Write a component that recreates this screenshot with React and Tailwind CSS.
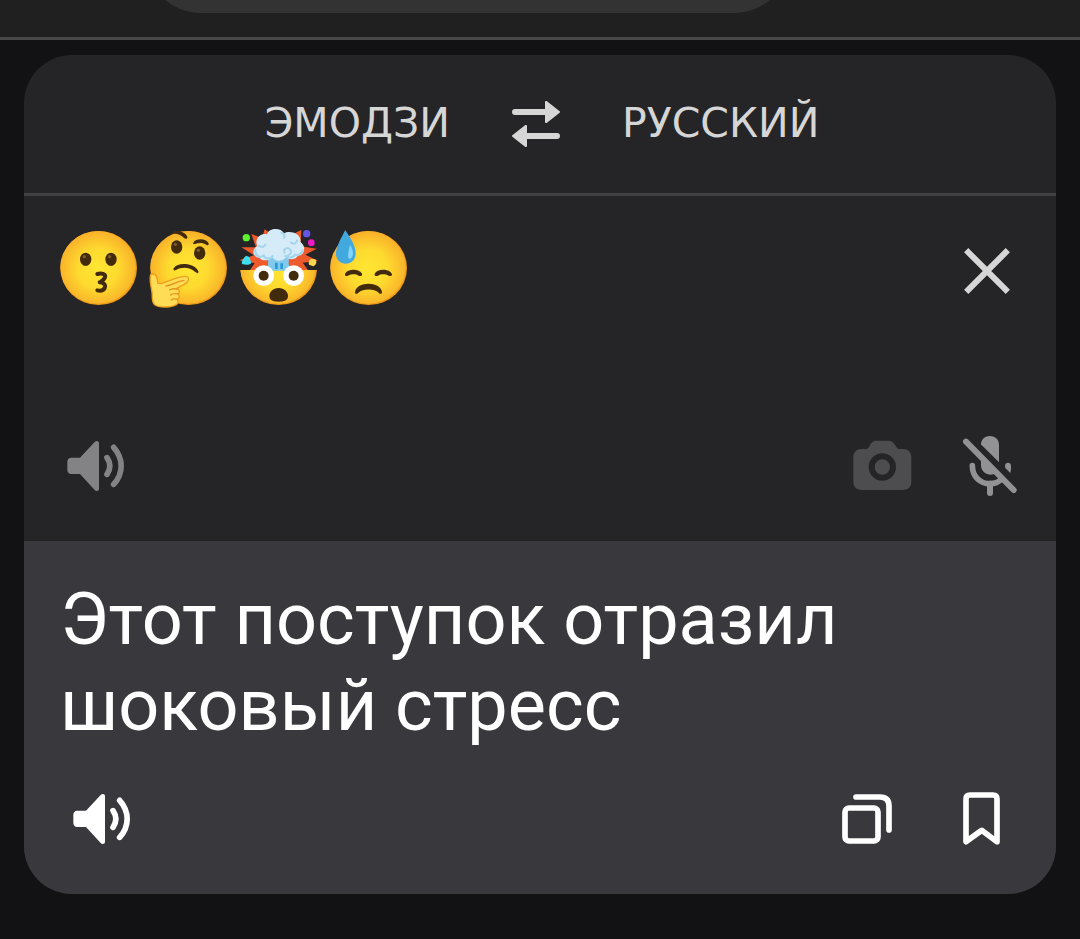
import { useState } from 'react';

function Face() {
  return (
    <>
      <defs>
        <radialGradient id="face" cx="50%" cy="52%" r="52%">
          <stop offset="0" stopColor="#ffe632" />
          <stop offset="0.5" stopColor="#fedb2f" />
          <stop offset="1" stopColor="#f9b02a" />
        </radialGradient>
      </defs>
      <ellipse cx="146" cy="144" rx="115" ry="111" fill="#ee9a18" />
      <ellipse cx="144" cy="142" rx="113" ry="109" fill="url(#face)" />
    </>
  );
}

function Eye({ cx, cy }) {
  return (
    <>
      <ellipse cx={cx} cy={cy} rx="17" ry="20" fill="#422b0d" />
      <ellipse cx={cx - 4} cy={cy - 8} rx="5" ry="5" fill="#7d5a2c" />
    </>
  );
}

function KissingEmoji() {
  return (
    <svg viewBox="0 0 270 285" className="h-[95px] w-[90px]" role="img" aria-label="😗">
      <Face />
      <Eye cx={107} cy={118} />
      <Eye cx={183} cy={118} />
      <path
        d="M142 162 C154 158 168 162 165 172 C163 180 154 184 149 187 C160 187 168 194 164 204 C160 212 150 213 142 211"
        fill="none"
        stroke="#422b0d"
        strokeWidth="12"
        strokeLinecap="round"
        strokeLinejoin="round"
      />
    </svg>
  );
}

function ThinkingEmoji() {
  return (
    <svg viewBox="0 0 270 285" className="h-[95px] w-[90px]" role="img" aria-label="🤔">
      <Face />
      <Eye cx={110} cy={81} />
      <Eye cx={179} cy={99} />
      <g fill="#422b0d">
        <path d="M96 39 C106 27 135 35 142 50 C144 56 137 58 132 54 C121 44 110 40 98 42 Z" />
        <path d="M160 68 C168 54 199 55 206 70 C207 77 201 77 196 73 C186 67 174 68 165 72 C160 73 158 71 160 68 Z" />
        <path d="M101 145 C114 125 164 129 175 154 C177 160 172 161 167 157 C148 140 126 140 108 150 C102 153 99 150 101 145 Z" />
      </g>
      <path
        d="M32 164 C39 159 49 164 51 174 L54 190 L67 190 C84 183 109 172 132 169 C145 168 150 178 142 186 C136 193 118 200 107 207 C118 205 122 216 114 222 C120 226 118 237 112 238 C117 247 112 255 104 256 C92 262 57 264 44 254 C34 246 38 231 36 217 C34 200 27 179 32 164 Z"
        fill="#ffdc55"
        stroke="#ed9f1d"
        strokeWidth="4"
      />
      <path
        d="M78 198 C94 195 112 184 132 181 M89 210 C97 205 107 206 114 207 M92 225 C98 219 108 221 114 222 M94 240 C98 236 106 236 112 238"
        fill="none"
        stroke="#e5941c"
        strokeWidth="4"
        strokeLinecap="round"
      />
    </svg>
  );
}

function ExplodingEmoji() {
  return (
    <svg viewBox="0 0 270 285" className="h-[95px] w-[90px]" role="img" aria-label="🤯">
      <defs>
        <clipPath id="bowl">
          <rect x="0" y="150" width="270" height="130" />
        </clipPath>
      </defs>
      <path
        d="M60 150 L74 130 L28 121 L72 106 L34 82 L78 82 L64 42 L96 54 L104 28 L130 46 L184 44 L214 30 L212 66 L222 80 L260 86 L226 104 L264 122 L218 128 L234 150 Z"
        fill="#ee5a2c"
      />
      <g clipPath="url(#bowl)">
        <Face />
      </g>
      <path d="M112 108 H178 C174 126 176 138 182 152 H108 C116 138 116 124 112 108 Z" fill="#81c9ed" />
      <path d="M139 128 V147 M155 130 V147" stroke="#259bd8" strokeWidth="8" />
      <path
        d="M88 113 C67 112 64 86 82 79 C72 58 91 36 111 43 C117 23 153 22 162 40 C181 29 216 43 211 66 C230 79 224 107 204 107 C196 121 175 120 168 111 C158 127 134 125 127 111 C117 124 96 124 88 113 Z"
        fill="#d5ecf8"
      />
      <g fill="none" stroke="#a3d5ed" strokeWidth="6" strokeLinecap="round">
        <path d="M76 89 C74 109 91 115 101 106 C105 118 121 119 127 108" />
        <path d="M87 78 C95 83 103 80 106 74" />
        <path d="M202 61 C199 72 190 73 183 68" />
        <path d="M164 98 C158 88 170 80 179 87 C189 96 178 111 164 107 C174 115 190 115 194 104 C205 108 216 99 218 91" />
        <path d="M154 38 C164 42 166 49 162 54" />
      </g>
      <circle cx="49" cy="53" r="11" fill="#5cf52d" />
      <circle cx="230" cy="41" r="11" fill="#6556e8" />
      <circle cx="244" cy="68" r="10" fill="#f019c5" />
      <path d="M48 107 L58 111 L64 128 C60 136 48 135 36 132 C34 121 40 116 48 107 Z" fill="#40dff0" />
      <path d="M244 116 L256 118 C262 126 258 136 250 139 L237 134 C234 124 238 120 244 116 Z" fill="#fdd64b" />
      <circle cx="101" cy="167" r="31" fill="#ffffff" />
      <circle cx="191" cy="167" r="31" fill="#ffffff" />
      <circle cx="101" cy="167" r="15" fill="#422b0d" />
      <circle cx="191" cy="167" r="15" fill="#422b0d" />
      <path d="M146 204 C163 204 174 216 174 228 C174 241 162 245 146 245 C130 245 118 241 118 228 C118 216 129 204 146 204 Z" fill="#422b0d" />
    </svg>
  );
}

function SweatEmoji() {
  return (
    <svg viewBox="0 0 270 285" className="h-[95px] w-[90px]" role="img" aria-label="😓">
      <Face />
      <path d="M76 30 C87 48 107 75 107 100 C107 119 94 131 78 131 C60 131 47 118 48 99 C49 78 66 50 76 30 Z" fill="#42a9df" />
      <path d="M90 74 C100 87 103 110 91 116 C80 119 84 98 90 74 Z" fill="#81d4fa" />
      <g fill="#422b0d">
        <path d="M75 163 C80 146 118 145 126 161 C128 168 121 170 116 167 C106 161 94 162 84 167 C78 169 74 168 75 163 Z" />
        <path d="M164 161 C172 145 210 146 216 163 C217 168 212 169 206 167 C196 162 184 161 174 167 C169 170 162 168 164 161 Z" />
        <path d="M105 216 C109 183 182 183 186 216 C186 223 180 223 176 218 C162 205 130 205 115 218 C110 223 105 223 105 216 Z" />
      </g>
    </svg>
  );
}

function SpeakerIcon() {
  return (
    <svg viewBox="0 0 180 156" className="h-[52px] w-[60px]" fill="currentColor" aria-hidden="true">
      <path d="M16 53 H42 L86 6 C91 1 99 3 99 10 V146 C99 153 91 155 86 150 L42 102 H16 C8 102 4 97 4 90 V65 C4 58 8 53 16 53 Z" />
      <path
        d="M123 53 C134 69 134 87 123 103 M143 22 C173 56 173 100 143 133"
        fill="none"
        stroke="currentColor"
        strokeWidth="17"
        strokeLinecap="round"
      />
    </svg>
  );
}

function SwapIcon() {
  return (
    <svg viewBox="0 0 144 144" className="size-12" fill="currentColor" aria-hidden="true">
      <path d="M9 36 H104 M40 108 H135" stroke="currentColor" strokeWidth="18" strokeLinecap="round" />
      <path d="M99 7 C99 3 102 2 105 4 L142 33 C145 35 145 37 142 39 L105 68 C102 70 99 69 99 65 Z" />
      <path d="M45 79 C45 75 42 74 39 76 L2 105 C-1 107 -1 109 2 111 L39 140 C42 142 45 141 45 137 Z" />
    </svg>
  );
}

function CloseIcon() {
  return (
    <svg viewBox="0 0 144 144" className="size-12" aria-hidden="true">
      <path d="M16 16 L128 128 M128 16 L16 128" stroke="currentColor" strokeWidth="18" strokeLinecap="square" />
    </svg>
  );
}

function CameraIcon() {
  return (
    <svg viewBox="0 3 186 162" className="h-[54px] w-[62px]" fill="currentColor" aria-hidden="true">
      <path
        fillRule="evenodd"
        d="M30 33 H42 C48 33 50 29 53 24 C58 12 64 8 75 8 H108 C119 8 125 12 131 24 C134 29 136 33 142 33 H152 C169 33 178 43 178 59 V130 C178 147 169 156 152 156 H30 C13 156 4 147 4 130 V59 C4 43 13 33 30 33 Z M91 46 A41 41 0 1 0 91 128 A41 41 0 1 0 91 46 Z"
      />
      <circle cx="91" cy="87" r="23" />
    </svg>
  );
}

function MicOffIcon() {
  return (
    <svg viewBox="0 0 168 186" className="h-[62px] w-[56px]" fill="currentColor" aria-hidden="true">
      <path d="M57 32 C56 15 67 3 84 3 C100 3 111 14 111 30 V82 L58 29 Z" />
      <path d="M57 71 L101 115 C84 126 57 115 57 91 Z" />
      <path
        d="M31 92 C31 124 54 146 84 146 C100 146 110 141 119 132"
        fill="none"
        stroke="currentColor"
        strokeWidth="17"
        strokeLinecap="round"
      />
      <path d="M84 146 V174 M12 20 L155 165" stroke="currentColor" strokeWidth="18" strokeLinecap="round" />
      <path d="M129 93 C129 80 147 80 147 93 C147 102 147 108 145 114 L130 99 Z" />
    </svg>
  );
}

function CopyIcon() {
  return (
    <svg
      viewBox="0 0 156 156"
      className="size-[52px]"
      fill="none"
      stroke="currentColor"
      strokeWidth="17"
      strokeLinecap="round"
      aria-hidden="true"
    >
      <rect x="12" y="45" width="99" height="99" rx="12" />
      <path d="M45 12 H117 C135 12 144 21 144 39 V111" />
    </svg>
  );
}

function BookmarkIcon() {
  return (
    <svg viewBox="0 0 117 165" className="h-[55px] w-[39px]" aria-hidden="true">
      <path
        d="M24 12 H93 C101 12 105 16 105 24 V152 L59 118 L12 152 V24 C12 16 16 12 24 12 Z"
        fill="none"
        stroke="currentColor"
        strokeWidth="17"
        strokeLinejoin="round"
      />
    </svg>
  );
}

const LANGUAGES = ['ЭМОДЗИ', 'РУССКИЙ'];

export default function App() {
  const [languages, setLanguages] = useState(LANGUAGES);
  const [hasText, setHasText] = useState(true);

  return (
    <div className="min-h-screen bg-[#121214]">
      <header className="flex h-10 overflow-hidden border-b-3 border-[#484848] bg-[#202020] pr-[291px] pl-[146px]">
        <div className="-mt-24 h-[109px] w-full shrink-0 rounded-[56px] bg-[#333333]" />
      </header>

      <main className="px-6 pt-[15px] pb-11">
        <div className="overflow-hidden rounded-[48px] bg-[#252527]">
          <div className="flex h-[141px] items-center justify-center gap-x-[62px] border-b-3 border-[#414143] pl-1 font-['DejaVu_Sans',sans-serif] text-[41px] text-[#d6d6d6]">
            <button type="button">{languages[0]}</button>
            <button type="button" aria-label="Поменять языки" onClick={() => setLanguages([languages[1], languages[0]])}>
              <SwapIcon />
            </button>
            <button type="button">{languages[1]}</button>
          </div>

          <section className="flex min-h-[345px] flex-col justify-between pt-6 pb-11">
            <div className="flex h-[95px] items-center justify-between pr-[45px] pl-[26px]">
              <div className="flex">
                {hasText && (
                  <>
                    <KissingEmoji />
                    <ThinkingEmoji />
                    <ExplodingEmoji />
                    <SweatEmoji />
                  </>
                )}
              </div>
              <button type="button" aria-label="Очистить" className="pt-1.5 text-[#d6d6d6]" onClick={() => setHasText(false)}>
                <CloseIcon />
              </button>
            </div>
            <div className="flex items-center pr-[38px] pl-[42px]">
              <button type="button" aria-label="Прослушать" className="mr-auto text-[#838385]">
                <SpeakerIcon />
              </button>
              <button type="button" aria-label="Камера" className="mr-12 text-[#4d4d4f]">
                <CameraIcon />
              </button>
              <button type="button" aria-label="Микрофон" className="text-[#929294]">
                <MicOffIcon />
              </button>
            </div>
          </section>

          <section className="bg-[#39383d] pt-9 pb-12 text-white">
            <p className="max-w-[900px] px-9 font-[Roboto,sans-serif] text-[72px] leading-[86px]">
              Этот поступок отразил шоковый стресс
            </p>
            <div className="mt-[42px] flex items-center pr-[55px] pl-12">
              <button type="button" aria-label="Прослушать перевод" className="mr-auto">
                <SpeakerIcon />
              </button>
              <button type="button" aria-label="Копировать" className="mr-[69px]">
                <CopyIcon />
              </button>
              <button type="button" aria-label="В закладки">
                <BookmarkIcon />
              </button>
            </div>
          </section>
        </div>
      </main>
    </div>
  );
}
